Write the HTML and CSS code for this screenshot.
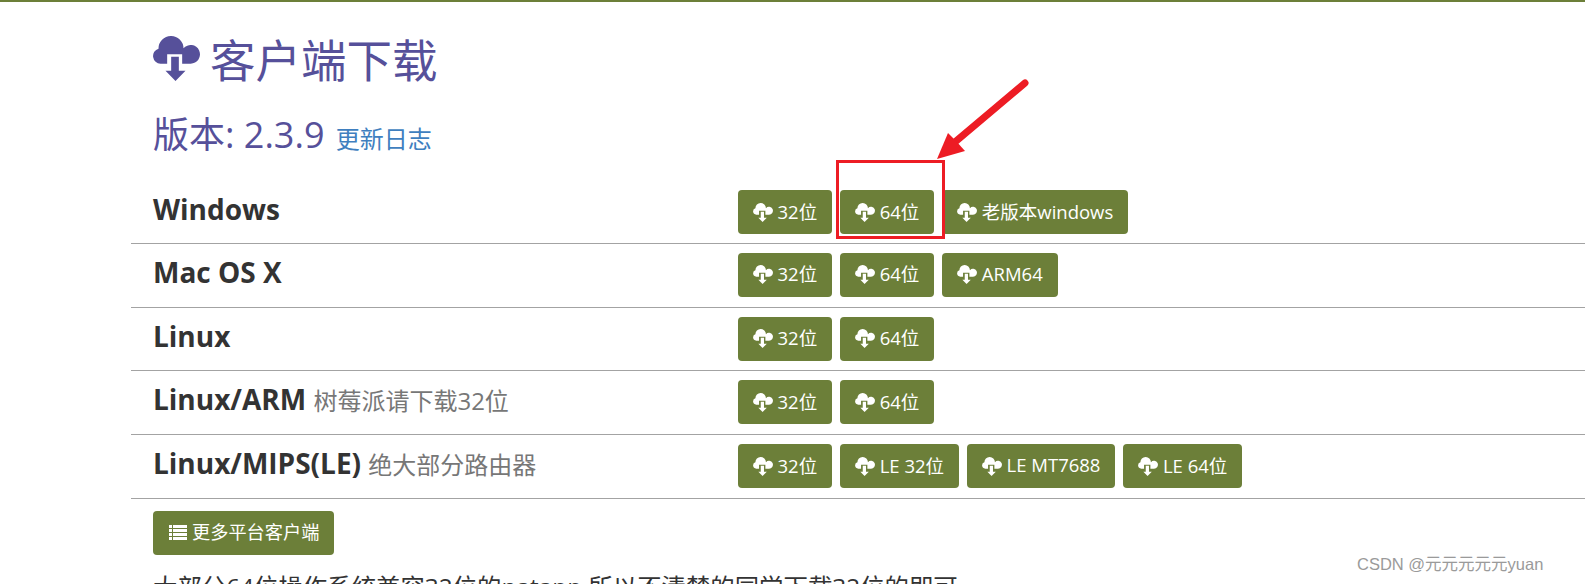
FILE: index.html
```html
<!DOCTYPE html>
<html lang="zh">
<head>
<meta charset="utf-8">
<title>客户端下载</title>
<link rel="stylesheet" href="styles.css">
</head>
<body>
<svg class="defs" width="0" height="0">
  <symbol id="cloud" viewBox="0 0 140 135">
    <path d="M42 83H22A23 23 0 0 1 16 38A37.5 37.5 0 0 1 91 37A28 28 0 1 1 112 83H87V55H42Z"/>
    <path d="M54 62H77V104H97L67 135 37 104H54Z"/>
  </symbol>
</svg>
<main class="page">
  <h1 class="title"><svg class="title-icon"><use href="#cloud"/></svg>客户端下载</h1>
  <h2 class="version">版本: 2.3.9 <a class="log" href="#">更新日志</a></h2>
  <div class="table">
    <div class="row">
      <div class="name">Windows</div>
      <div class="btns">
        <a class="btn"><svg class="i"><use href="#cloud"/></svg>32位</a>
        <a class="btn"><svg class="i"><use href="#cloud"/></svg>64位</a>
        <a class="btn"><svg class="i"><use href="#cloud"/></svg>老版本windows</a>
      </div>
    </div>
    <div class="row">
      <div class="name">Mac OS X</div>
      <div class="btns">
        <a class="btn"><svg class="i"><use href="#cloud"/></svg>32位</a>
        <a class="btn"><svg class="i"><use href="#cloud"/></svg>64位</a>
        <a class="btn"><svg class="i"><use href="#cloud"/></svg>ARM64</a>
      </div>
    </div>
    <div class="row">
      <div class="name">Linux</div>
      <div class="btns">
        <a class="btn"><svg class="i"><use href="#cloud"/></svg>32位</a>
        <a class="btn"><svg class="i"><use href="#cloud"/></svg>64位</a>
      </div>
    </div>
    <div class="row">
      <div class="name">Linux/ARM <small>树莓派请下载32位</small></div>
      <div class="btns">
        <a class="btn"><svg class="i"><use href="#cloud"/></svg>32位</a>
        <a class="btn"><svg class="i"><use href="#cloud"/></svg>64位</a>
      </div>
    </div>
    <div class="row">
      <div class="name">Linux/MIPS(LE) <small>绝大部分路由器</small></div>
      <div class="btns">
        <a class="btn"><svg class="i"><use href="#cloud"/></svg>32位</a>
        <a class="btn"><svg class="i"><use href="#cloud"/></svg>LE 32位</a>
        <a class="btn"><svg class="i"><use href="#cloud"/></svg>LE MT7688</a>
        <a class="btn"><svg class="i"><use href="#cloud"/></svg>LE 64位</a>
      </div>
    </div>
  </div>
  <a class="btn more"><svg class="list" viewBox="0 0 18 15"><path d="M0 0h3v3H0zM4 0h14v3H4zM0 4h3v3H0zM4 4h14v3H4zM0 8h3v3H0zM4 8h14v3H4zM0 12h3v3H0zM4 12h14v3H4z"/></svg>更多平台客户端</a>
  <p class="note">大部分64位操作系统兼容32位的natapp,所以不清楚的同学下载32位的即可</p>
</main>
<div class="redbox"></div>
<svg class="arrow" viewBox="0 0 120 120">
  <path class="shaft" d="M102 13 32 72"/>
  <path class="head" d="M14 89 25 63 33 71 42 81Z"/>
</svg>
<div class="mark">CSDN @元元元元元yuan</div>
</body>
</html>
```
FILE: styles.css
```css
* { box-sizing: border-box; }
html, body { margin: 0; height: 584px; overflow: hidden; }
body {
  background: #fff;
  border-top: 2px solid #6c7f39;
  font-family: "Open Sans", "Noto Sans CJK SC", sans-serif;
  color: #333;
  position: relative;
}
.defs { position: absolute; }
.page { padding: 0 0 0 131px; }
.title {
  margin: 0;
  padding: 31px 0 0 22px;
  display: flex;
  align-items: center;
  height: 85px;
  font-size: 45.5px;
  font-weight: 400;
  line-height: 54px;
  color: #56509a;
}
.title-icon { width: 47px; height: 45px; margin: -4px 10px 0 0; fill: #56509a; }
.version {
  margin: 0;
  padding: 26px 0 0 22px;
  height: 93px;
  font-size: 36px;
  line-height: 44px;
  font-weight: 400;
  color: #56509a;
}
.log { font-size: 24px; color: #3f7fbf; text-decoration: none; margin-left: 2px; }
.row {
  display: flex;
  height: 63.75px;
  padding: 9px 0 0 22px;
  border-bottom: 1px solid #a3a3a3;
}
.row:first-child { padding-top: 10px; }
.name {
  width: 585px;
  flex: none;
  font-size: 28px;
  font-weight: 700;
  line-height: 38px;
  white-space: nowrap;
}
.name small { font-size: 24px; font-weight: 400; color: #777; }
.btns { display: flex; gap: 8px; align-items: flex-start; }
.btn {
  display: inline-flex;
  align-items: center;
  height: 44px;
  padding: 0 15px 3px 15px;
  background: #6c7f39;
  border-radius: 4px;
  color: #fff;
  font-size: 18.5px;
  white-space: nowrap;
}
.i { width: 20px; height: 19px; margin: 3px 4.5px 0 0; fill: #fff; }
.more { margin: 12px 0 0 22px; padding-left: 16px; padding-right: 15px; font-size: 18.2px; }
.list { width: 18px; height: 15px; margin: 3px 5px 0 0; fill: #fff; }
.note { margin: 15px 0 0 22px; font-size: 24.4px; line-height: 34px; white-space: nowrap; }
.redbox {
  position: absolute;
  left: 836px; top: 158px;
  width: 109px; height: 79px;
  border: 3px solid #ed1c24;
}
.arrow { position: absolute; left: 923px; top: 68px; width: 120px; height: 120px; }
.shaft { fill: none; stroke: #ed1c24; stroke-width: 7px; stroke-linecap: round; }
.head { fill: #ed1c24; }
.mark {
  position: absolute;
  left: 1357px; top: 549px;
  font-family: "Liberation Sans", "Noto Sans CJK SC", sans-serif;
  font-size: 16.5px;
  color: #9a9a9a;
  white-space: nowrap;
}
```
